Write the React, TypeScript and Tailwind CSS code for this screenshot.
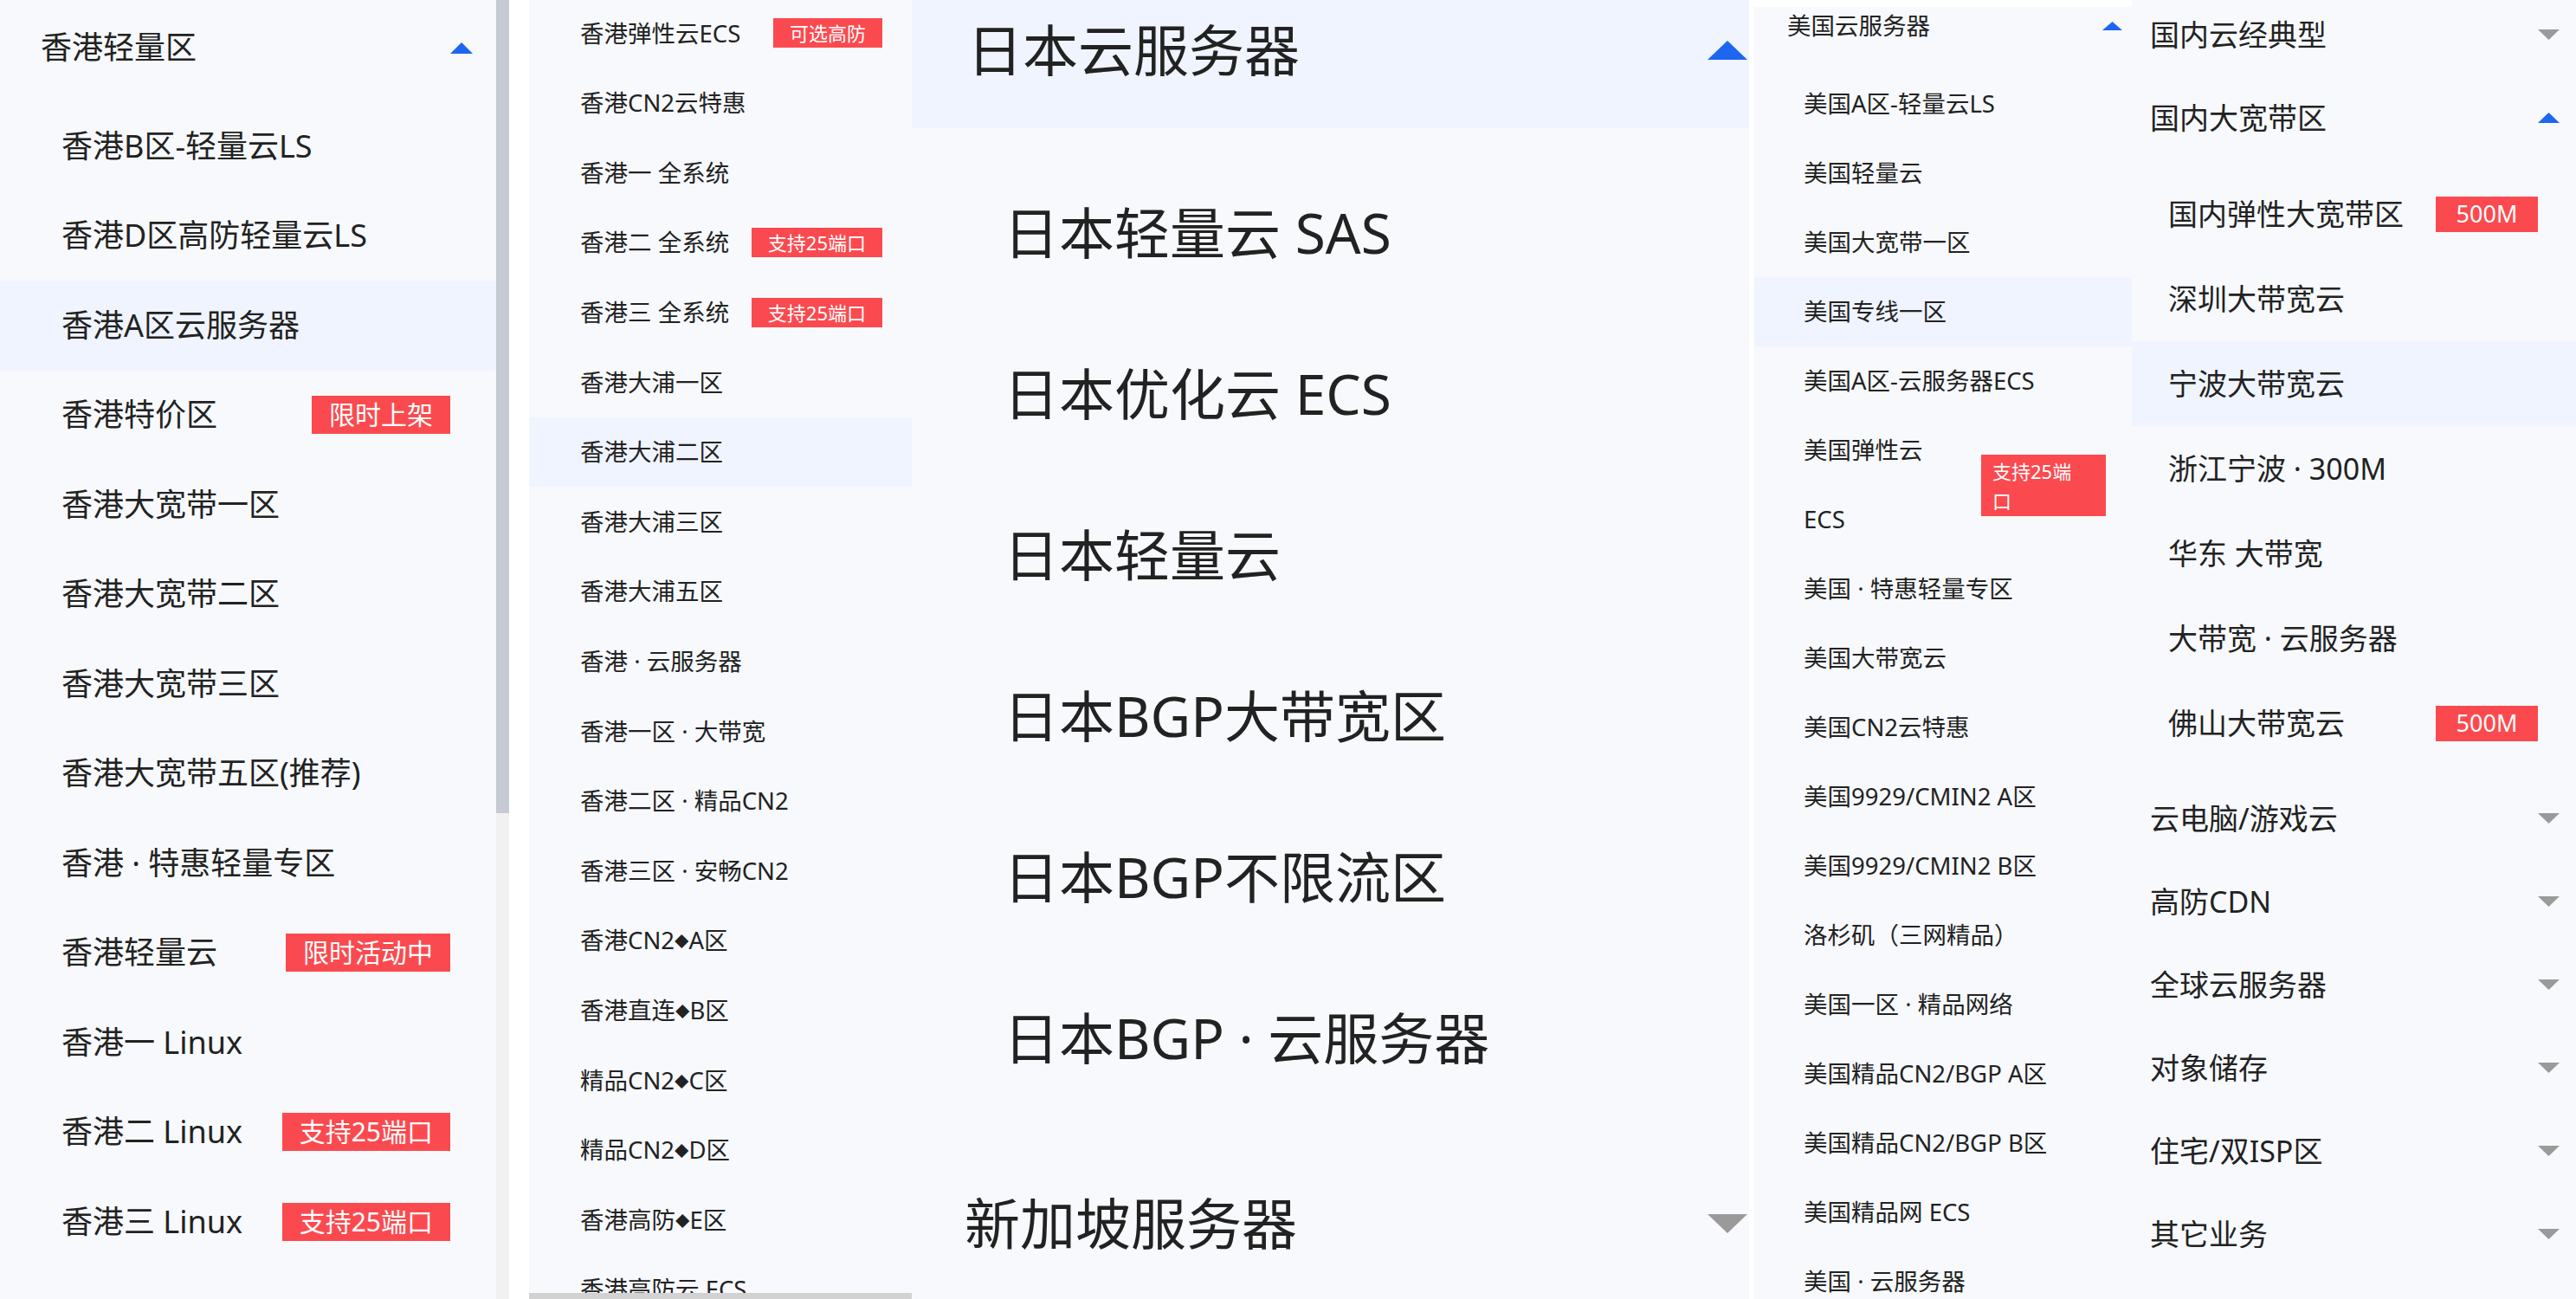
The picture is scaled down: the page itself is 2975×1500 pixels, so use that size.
import React from "react";

const BLUE = "#1d66f0";
const GRAY = "#9a9a9a";

function TriUp({ w, h, color }: { w: number; h: number; color: string }) {
  return (
    <svg width={w} height={h} viewBox="0 0 20 10" preserveAspectRatio="none" className="shrink-0">
      <polygon points="0,10 10,0 20,10" fill={color} />
    </svg>
  );
}
function TriDown({ w, h, color }: { w: number; h: number; color: string }) {
  return (
    <svg width={w} height={h} viewBox="0 0 20 10" preserveAspectRatio="none" className="shrink-0">
      <polygon points="0,0 20,0 10,10" fill={color} />
    </svg>
  );
}

function Txt({ t }: { t: string }) {
  const parts = t.split("◆");
  return (
    <span>
      {parts.map((p, i) => (
        <React.Fragment key={i}>
          {i > 0 && <span className="text-[0.6em] align-[0.12em]">◆</span>}
          {p}
        </React.Fragment>
      ))}
    </span>
  );
}

type Item = { t: string; b?: string; hl?: boolean };

const p1: Item[] = [
  { t: "香港B区-轻量云LS" },
  { t: "香港D区高防轻量云LS" },
  { t: "香港A区云服务器", hl: true },
  { t: "香港特价区", b: "限时上架" },
  { t: "香港大宽带一区" },
  { t: "香港大宽带二区" },
  { t: "香港大宽带三区" },
  { t: "香港大宽带五区(推荐)" },
  { t: "香港 · 特惠轻量专区" },
  { t: "香港轻量云", b: "限时活动中" },
  { t: "香港一 Linux" },
  { t: "香港二 Linux", b: "支持25端口" },
  { t: "香港三 Linux", b: "支持25端口" },
];

const p2: Item[] = [
  { t: "香港弹性云ECS", b: "可选高防" },
  { t: "香港CN2云特惠" },
  { t: "香港一 全系统" },
  { t: "香港二 全系统", b: "支持25端口" },
  { t: "香港三 全系统", b: "支持25端口" },
  { t: "香港大浦一区" },
  { t: "香港大浦二区", hl: true },
  { t: "香港大浦三区" },
  { t: "香港大浦五区" },
  { t: "香港 · 云服务器" },
  { t: "香港一区 · 大带宽" },
  { t: "香港二区 · 精品CN2" },
  { t: "香港三区 · 安畅CN2" },
  { t: "香港CN2◆A区" },
  { t: "香港直连◆B区" },
  { t: "精品CN2◆C区" },
  { t: "精品CN2◆D区" },
  { t: "香港高防◆E区" },
  { t: "香港高防云 ECS" },
];

const p3: string[] = [
  "日本轻量云 SAS",
  "日本优化云 ECS",
  "日本轻量云",
  "日本BGP大带宽区",
  "日本BGP不限流区",
  "日本BGP · 云服务器",
];

const p4a: Item[] = [
  { t: "美国A区-轻量云LS" },
  { t: "美国轻量云" },
  { t: "美国大宽带一区" },
  { t: "美国专线一区", hl: true },
  { t: "美国A区-云服务器ECS" },
];
const p4b: Item[] = [
  { t: "美国 · 特惠轻量专区" },
  { t: "美国大带宽云" },
  { t: "美国CN2云特惠" },
  { t: "美国9929/CMIN2 A区" },
  { t: "美国9929/CMIN2 B区" },
  { t: "洛杉矶（三网精品）" },
  { t: "美国一区 · 精品网络" },
  { t: "美国精品CN2/BGP A区" },
  { t: "美国精品CN2/BGP B区" },
  { t: "美国精品网 ECS" },
  { t: "美国 · 云服务器" },
];

const p5items: Item[] = [
  { t: "国内弹性大宽带区", b: "500M" },
  { t: "深圳大带宽云" },
  { t: "宁波大带宽云", hl: true },
  { t: "浙江宁波 · 300M" },
  { t: "华东 大带宽" },
  { t: "大带宽 · 云服务器" },
  { t: "佛山大带宽云", b: "500M" },
];
const p5heads: string[] = ["云电脑/游戏云", "高防CDN", "全球云服务器", "对象储存", "住宅/双ISP区", "其它业务"];

export default function App() {
  return (
    <div className="w-[2975px] h-[1500px] flex bg-white overflow-hidden text-[#222222] font-['Noto_Sans','Noto_Sans_CJK_SC',sans-serif] whitespace-nowrap">
      {/* Panel 1 */}
      <div className="w-[573px] h-full bg-[#f7f9fc] shrink-0">
        <div className="h-[110px] mb-[7px] flex items-center justify-between pl-[47px] pr-[27px] text-[36px]">
          <span>香港轻量区</span>
          <TriUp w={26} h={13} color={BLUE} />
        </div>
        {p1.map((it, i) => (
          <div
            key={i}
            className={`h-[103.5px] flex items-center justify-between pl-[71px] pr-[53px] text-[36px] ${it.hl ? "bg-[#eff4fe]" : ""}`}
          >
            <Txt t={it.t} />
            {it.b && (
              <span className="h-[44px] px-[20px] text-[30px] leading-[44px] bg-[#fb4a4f] text-white">{it.b}</span>
            )}
          </div>
        ))}
      </div>
      <div className="w-[15px] h-full flex flex-col shrink-0">
        <div className="h-[939px] bg-[#c6cad3]" />
        <div className="flex-1 bg-[#f1f1f1]" />
      </div>
      <div className="w-[23px] h-full bg-white shrink-0" />

      {/* Panel 2 */}
      <div className="w-[442px] h-full flex flex-col shrink-0 bg-[#f7f9fc]">
        <div className="flex-1 overflow-hidden">
          <div className="mt-[-2px]">
            {p2.map((it, i) => (
              <div
                key={i}
                className={`h-[80.6px] flex items-center justify-between pl-[59px] pr-[34px] text-[27.5px] ${it.hl ? "bg-[#eff4fe]" : ""}`}
              >
                <Txt t={it.t} />
                {it.b && (
                  <span className="h-[34px] px-[19px] text-[22px] leading-[34px] bg-[#fb4a4f] text-white">{it.b}</span>
                )}
              </div>
            ))}
          </div>
        </div>
        <div className="h-[7px] bg-[#d2d2d2] shrink-0" />
      </div>

      {/* Panel 3 */}
      <div className="w-[967px] h-full bg-[#f7f9fc] shrink-0 overflow-hidden">
        <div className="h-[148px] bg-[#eff4fe]">
          <div className="h-[116px] flex items-center justify-between pl-[64px] pr-[2px] text-[64px]">
            <span>日本云服务器</span>
            <TriUp w={46} h={22} color={BLUE} />
          </div>
        </div>
        <div className="mt-[28px]">
          {p3.map((t, i) => (
            <div key={i} className="h-[186px] flex items-center pl-[106px] text-[64px]">
              {t}
            </div>
          ))}
        </div>
        <div className="mt-[63px] h-[116px] flex items-center justify-between pl-[61px] pr-[2px] text-[64px]">
          <span>新加坡服务器</span>
          <TriDown w={46} h={22} color={GRAY} />
        </div>
      </div>
      <div className="w-[6px] h-full bg-white shrink-0" />

      {/* Panel 4 */}
      <div className="w-[436px] h-full flex flex-col shrink-0">
        <div className="h-[8px] bg-white shrink-0" />
        <div className="flex-1 bg-[#f7f9fc] overflow-hidden">
          <div className="h-[72px]">
            <div className="h-[44px] flex items-center justify-between pl-[38px] pr-[11px] text-[27.5px]">
              <span>美国云服务器</span>
              <TriUp w={23} h={10} color={BLUE} />
            </div>
          </div>
          {p4a.map((it, i) => (
            <div key={i} className={`h-[80px] flex items-center pl-[57px] text-[27.5px] ${it.hl ? "bg-[#eff4fe]" : ""}`}>
              {it.t}
            </div>
          ))}
          <div className="h-[160px] flex items-start justify-between pl-[57px] pr-[30px] text-[27.5px]">
            <div className="flex flex-col leading-[80px]">
              <span>美国弹性云</span>
              <span>ECS</span>
            </div>
            <div className="mt-[45px] w-[144px] h-[71px] pl-[13px] pt-[2px] bg-[#fb4a4f] text-white text-[22px] leading-[34px] flex flex-col">
              <span>支持25端</span>
              <span>口</span>
            </div>
          </div>
          {p4b.map((it, i) => (
            <div key={i} className="h-[80px] flex items-center pl-[57px] text-[27.5px]">
              {it.t}
            </div>
          ))}
        </div>
      </div>

      {/* Panel 5 */}
      <div className="w-[513px] h-full bg-[#f7f9fc] shrink-0 overflow-hidden">
        <div className="mt-[-8px]">
          <div className="h-[96px] flex items-center justify-between pl-[21px] pr-[19px] text-[34px]">
            <span>国内云经典型</span>
            <TriDown w={25} h={12} color={GRAY} />
          </div>
          <div className="h-[96px] flex items-center justify-between pl-[21px] pr-[19px] text-[34px]">
            <span>国内大宽带区</span>
            <TriUp w={25} h={12} color={BLUE} />
          </div>
          <div className="pt-[14px] pb-[13px]">
            {p5items.map((it, i) => (
              <div
                key={i}
                className={`h-[98px] flex items-center justify-between pl-[42px] pr-[44px] text-[34px] ${it.hl ? "bg-[#eff4fe]" : ""}`}
              >
                <span>{it.t}</span>
                {it.b && (
                  <span className="w-[118px] h-[41px] flex items-center justify-center text-[27px] bg-[#fb4a4f] text-white">
                    {it.b}
                  </span>
                )}
              </div>
            ))}
          </div>
          {p5heads.map((t, i) => (
            <div key={i} className="h-[96px] flex items-center justify-between pl-[21px] pr-[19px] text-[34px]">
              <span>{t}</span>
              <TriDown w={25} h={12} color={GRAY} />
            </div>
          ))}
        </div>
      </div>
    </div>
  );
}
